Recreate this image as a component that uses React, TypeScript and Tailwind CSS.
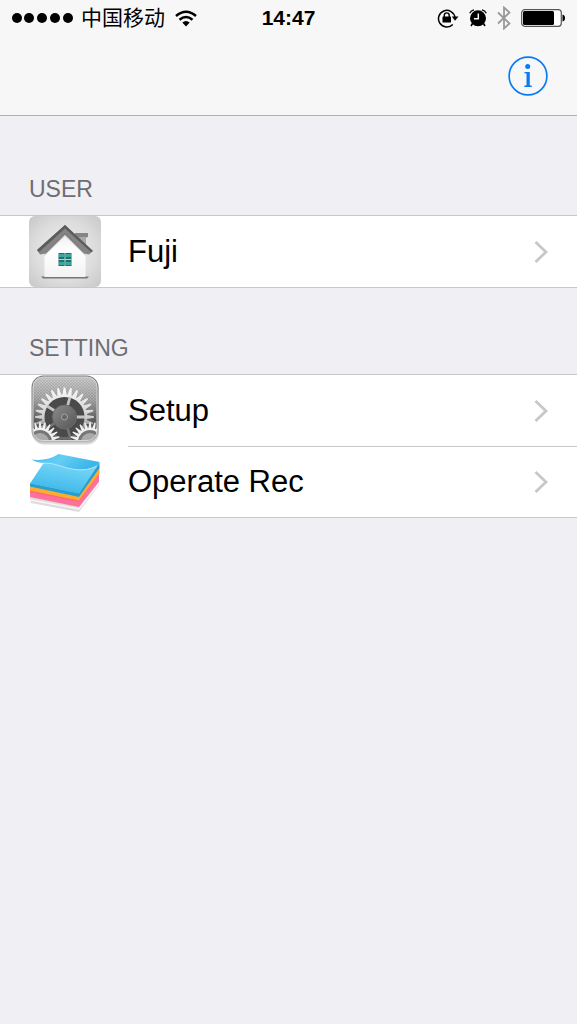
import type { ReactNode } from 'react';

function gearPath(cx: number, cy: number, outer: number, inner: number, teeth: number): string {
  const points: string[] = [];
  const step = (Math.PI * 2) / teeth;
  for (let i = 0; i < teeth; i++) {
    const a = i * step - Math.PI / 2;
    const corners: [number, number][] = [
      [inner, -0.42],
      [outer, -0.12],
      [outer, 0.12],
      [inner, 0.42],
    ];
    for (const [r, t] of corners) {
      points.push(`${(cx + r * Math.cos(a + t * step)).toFixed(2)} ${(cy + r * Math.sin(a + t * step)).toFixed(2)}`);
    }
  }
  return `M${points.join('L')}Z`;
}

function HouseIcon() {
  return (
    <svg viewBox="0 0 72 71" className="h-[71px] w-[72px]" aria-hidden="true">
      <defs>
        <radialGradient id="houseBg" cx="0.5" cy="0.5" r="0.72">
          <stop offset="0" stopColor="#f2f2f2" />
          <stop offset="0.6" stopColor="#dcdcdc" />
          <stop offset="1" stopColor="#c6c6c6" />
        </radialGradient>
        <linearGradient id="houseWall" x1="0" y1="0" x2="0" y2="1">
          <stop offset="0" stopColor="#ececec" />
          <stop offset="0.4" stopColor="#ffffff" />
          <stop offset="1" stopColor="#f3f3f3" />
        </linearGradient>
        <linearGradient id="houseRoof" x1="0" y1="0" x2="0" y2="1">
          <stop offset="0" stopColor="#6d6d6d" />
          <stop offset="1" stopColor="#858585" />
        </linearGradient>
      </defs>
      <rect width="72" height="71" rx="6" fill="url(#houseBg)" />
      <path d="M46 17h12v5h-1v12H50V22h-4z" fill="#a9a9a9" />
      <path d="M46 17h13v4H47z" fill="#858585" />
      <path d="M12 60.500h48l-2 2H14z" fill="#777" />
      <path d="M15.500 36L36 16l20.500 20v25h-41z" fill="url(#houseWall)" />
      <path d="M15.500 40L36 20l20.500 20v-6L36 14 15.500 34z" fill="#9b9b9b" opacity="0.450" />
      <path d="M36 9L64 35l-4 3.500-5-1L36 18.500 17 37.500l-6 1L8 34z" fill="url(#houseRoof)" />
      <path d="M36 9L64 35l-2 1L36 12 10 36l-2-2z" fill="#5b5b5b" />
      <path d="M36 13L12 35l4 1 20-19 20 19 4-1z" fill="#858585" />
      <rect x="29.500" y="37" width="13" height="13" fill="#236f6d" />
      <path d="M30 38h5v3h-5zM37 38h5v3h-5zM30 46h5v3h-5zM37 46h5v3h-5z" fill="#3aa99c" />
      <path d="M36 37v13M29.500 43.500h13" stroke="#a5d9d3" strokeWidth="1" />
    </svg>
  );
}

function GearsIcon() {
  return (
    <svg viewBox="0 0 72 71" className="h-[71px] w-[72px]" aria-hidden="true">
      <defs>
        <linearGradient id="gearBg" x1="0" y1="0" x2="0" y2="1">
          <stop offset="0" stopColor="#cdcdcd" />
          <stop offset="0.350" stopColor="#a8a8a8" />
          <stop offset="0.7" stopColor="#5c5c5c" />
          <stop offset="1" stopColor="#4a4a4a" />
        </linearGradient>
        <linearGradient id="gearMetal" x1="0" y1="0" x2="0" y2="1">
          <stop offset="0" stopColor="#fafafa" />
          <stop offset="0.5" stopColor="#d0d0d0" />
          <stop offset="0.750" stopColor="#6a6a6a" />
        </linearGradient>
        <linearGradient id="gearHub" x1="0" y1="0" x2="1" y2="1">
          <stop offset="0" stopColor="#8c8c8c" />
          <stop offset="1" stopColor="#555" />
        </linearGradient>
        <linearGradient id="gearRim" x1="0" y1="0" x2="0" y2="1">
          <stop offset="0" stopColor="#777" />
          <stop offset="0.7" stopColor="#8a8a8a" />
          <stop offset="1" stopColor="#bbb" />
        </linearGradient>
        <pattern id="gearMesh" width="3" height="3" patternUnits="userSpaceOnUse">
          <path d="M0 0l3 3M3 0L0 3" stroke="#000" strokeWidth="0.400" opacity="0.200" />
        </pattern>
        <clipPath id="gearClip">
          <rect x="4" y="2" width="64" height="63" rx="9" />
        </clipPath>
      </defs>
      <rect x="3" y="2" width="67" height="67.500" rx="12" fill="#bcbcbc" opacity="0.600" />
      <rect x="2.500" y="0.500" width="67" height="67" rx="12" fill="url(#gearRim)" />
      <g clipPath="url(#gearClip)">
        <rect x="4" y="2" width="64" height="64" fill="url(#gearBg)" />
        <rect x="4" y="2" width="64" height="64" fill="url(#gearMesh)" />
        <path d={gearPath(35.5, 42, 29.5, 22.5, 28)} fill="url(#gearMetal)" />
        <circle cx="35.500" cy="42" r="20" fill="#4e4e4e" />
        <circle cx="35.500" cy="42" r="20" fill="url(#gearMesh)" />
        <path d="M35.500 42L41 22M35.500 42H56M35.500 42L18 31" stroke="#c4c4c4" strokeWidth="2.800" />
        <path d="M35.500 42L18 53M35.500 42L41 62" stroke="#777" strokeWidth="2.500" />
        <circle cx="35.500" cy="42" r="12" fill="url(#gearHub)" stroke="#6a6a6a" />
        <circle cx="35.500" cy="42" r="3" fill="#666" stroke="#a5a5a5" strokeWidth="1" />
        <path d={gearPath(11, 67, 20, 14, 24)} fill="#f0f0f0" />
        <circle cx="11" cy="67" r="12" fill="#777" />
        <circle cx="11" cy="67" r="9" fill="#aaa" />
        <path d={gearPath(61, 67, 20, 14, 24)} fill="#f0f0f0" />
        <circle cx="61" cy="67" r="12" fill="#777" />
        <circle cx="61" cy="67" r="9" fill="#aaa" />
      </g>
      <rect x="4" y="2" width="64" height="63.500" rx="10" fill="none" stroke="#d6d6d6" strokeWidth="1" />
    </svg>
  );
}

function NotesIcon() {
  return (
    <svg viewBox="0 0 72 71" className="h-[71px] w-[72px]" aria-hidden="true">
      <defs>
        <linearGradient id="noteTop" x1="0.6" y1="0" x2="0.300" y2="1">
          <stop offset="0" stopColor="#8adcf8" />
          <stop offset="0.5" stopColor="#5fcaf2" />
          <stop offset="1" stopColor="#3ab5e8" />
        </linearGradient>
        <linearGradient id="noteCurl" x1="0" y1="0" x2="1" y2="0.300">
          <stop offset="0" stopColor="#45bdeb" />
          <stop offset="0.500" stopColor="#63cdf4" />
          <stop offset="1" stopColor="#3ab6e8" />
        </linearGradient>
      </defs>
      <path d="M1 50l49 9.500L69.500 35v5L50 66 2 57z" fill="#dedbdd" />
      <path d="M1.500 54L50 63l19.500-25" fill="none" stroke="#f7f5f6" strokeWidth="1.500" />
      <path d="M1 43l49 10 20-27v9.500L50 61 1 51z" fill="#ff709c" />
      <path d="M1 43l49 10 20-27v2.500L50 56 1 46z" fill="#fb6b78" />
      <path d="M1 39l49 10.500L70.500 21v6L50 54.500 1 44.500z" fill="#ffac2c" />
      <path d="M1 37l49 10L70.500 16v6L50 51 1 40.500z" fill="#289fcf" />
      <path d="M1 37.500L14 18l15-8 41.500 7L50 47.500z" fill="url(#noteTop)" />
      <path d="M2 13.500Q18 15.500 29.500 8L70.500 16 68 20q-10 5-22 3.500-8-1-16-4-7-2.500-16-2.500-7-.5-12-3.500z" fill="url(#noteCurl)" />
      <path d="M14 17q9 0 16 2.500 8 3 16 4 12 1.500 22-3.500" fill="none" stroke="#b0e7fb" strokeWidth="1" />
    </svg>
  );
}

function WifiIcon() {
  return (
    <svg viewBox="0 0 22 17" className="h-[17px] w-[22px]" aria-hidden="true">
      <g fill="none" stroke="#000" strokeWidth="2.500">
        <path d="M1 6Q11-2.500 21 6" />
        <path d="M4.500 9.800Q11 4.200 17.500 9.800" />
      </g>
      <path d="M7.300 12.400Q11 9.400 14.700 12.400L11 16.500z" />
    </svg>
  );
}

function RotationLockIcon() {
  return (
    <svg viewBox="0 0 22 20" className="h-5 w-[22px]" aria-hidden="true">
      <path d="M15.800 16.400A8.300 8.300 0 1 1 18 9.500" fill="none" stroke="#000" strokeWidth="1.500" />
      <path d="M14.800 8.500h6.700L18 12.800z" />
      <rect x="5.500" y="8.500" width="8.500" height="6" rx="0.600" />
      <path d="M7.300 9V7.300a2.450 2.450 0 0 1 4.900 0V9" fill="none" stroke="#000" strokeWidth="1.400" />
    </svg>
  );
}

function AlarmIcon() {
  return (
    <svg viewBox="0 0 18 18" className="h-[18px] w-[18px]" aria-hidden="true">
      <circle cx="9" cy="9.300" r="8" />
      <path d="M.7 4.300Q2 1.600 5 .9M17.300 4.300Q16 1.600 13 .9" fill="none" stroke="#000" strokeWidth="1.300" />
      <path d="M3.500 14.500L2 17M14.500 14.500L16 17" stroke="#000" strokeWidth="1.600" />
      <path d="M9.300 4.500v5.300H5" fill="none" stroke="#f7f7f7" strokeWidth="1.500" />
    </svg>
  );
}

function BluetoothIcon() {
  return (
    <svg viewBox="0 0 14 24" className="h-6 w-3.5" aria-hidden="true">
      <path d="M1 6.500l11.500 11L7 22.500v-21l5.500 5L1 17.500" fill="none" stroke="#999" strokeWidth="1.800" />
    </svg>
  );
}

function BatteryIcon() {
  return (
    <svg viewBox="0 0 44 18" className="h-[18px] w-11" aria-hidden="true">
      <rect x="0.700" y="0.700" width="39.600" height="16.600" rx="3" fill="#fff" stroke="#555" strokeWidth="1.200" />
      <rect x="2" y="2" width="31" height="14" rx="1.500" />
      <path d="M41.500 5.500q2.500.5 2.500 3.500t-2.500 3.500z" />
    </svg>
  );
}

function InfoIcon() {
  return (
    <svg viewBox="0 0 40 40" className="h-10 w-10" aria-hidden="true">
      <circle cx="20" cy="20" r="18.900" fill="none" stroke="#0a7cf2" strokeWidth="1.700" />
      <circle cx="19.700" cy="10.500" r="2.500" fill="#0a7cf2" />
      <path d="M16.500 16h5.300v13.300l2 .5v1.200h-7.500v-1.200l2.200-.5V17.600l-2-.4z" fill="#0a7cf2" />
    </svg>
  );
}

function Chevron() {
  return (
    <svg viewBox="0 0 16 24" className="h-6 w-4 shrink-0" aria-hidden="true">
      <path d="M2.500 2l10.500 10L2.500 22" fill="none" stroke="#c7c7cc" strokeWidth="2.800" />
    </svg>
  );
}

function Row({ icon, label, divided = false }: { icon: ReactNode; label: string; divided?: boolean }) {
  return (
    <li>
      <button type="button" className="flex w-full items-stretch pl-[29px] text-left">
        <span className="w-[72px] shrink-0">{icon}</span>
        <span
          className={`ml-[27px] flex grow items-center justify-between pr-7 ${divided ? 'border-t border-[#c8c7cc]' : ''}`}
        >
          <span className="text-[31px] leading-9">{label}</span>
          <Chevron />
        </span>
      </button>
    </li>
  );
}

function Section({ title, children }: { title: string; children: ReactNode }) {
  return (
    <section>
      <h2 className="px-[29px] pb-3 text-[23px] leading-7 text-[#6d6d72]">{title}</h2>
      <ul className="border-y border-[#c8c7cc] bg-white">{children}</ul>
    </section>
  );
}

export default function App() {
  return (
    <div className="min-h-screen bg-[#efeff4] font-['Liberation_Sans','Noto_Sans_CJK_SC',sans-serif] text-black">
      <header className="border-b border-[#b2b2b2] bg-[#f7f7f7]">
        <div className="grid h-9 grid-cols-[1fr_auto_1fr] items-center pl-3 pr-3">
          <div className="flex items-center">
            <svg viewBox="0 0 61 10" className="h-2.5 w-[61px]" aria-hidden="true">
              {[5, 17, 30, 43, 56].map((x) => (
                <circle key={x} cx={x} cy="5" r="5" />
              ))}
            </svg>
            <span className="ml-2 mr-2.5 text-[21px] leading-7">中国移动</span>
            <WifiIcon />
          </div>
          <time className="text-[21px] font-bold leading-7">14:47</time>
          <div className="flex items-center justify-end gap-2.5">
            <RotationLockIcon />
            <AlarmIcon />
            <BluetoothIcon />
            <BatteryIcon />
          </div>
        </div>
        <div className="flex h-[79px] items-center justify-end pr-[29px]">
          <button type="button" aria-label="Info">
            <InfoIcon />
          </button>
        </div>
      </header>
      <main className="flex flex-col gap-[46px] pt-[59px]">
        <Section title="USER">
          <Row icon={<HouseIcon />} label="Fuji" />
        </Section>
        <Section title="SETTING">
          <Row icon={<GearsIcon />} label="Setup" />
          <Row icon={<NotesIcon />} label="Operate Rec" divided />
        </Section>
      </main>
    </div>
  );
}
